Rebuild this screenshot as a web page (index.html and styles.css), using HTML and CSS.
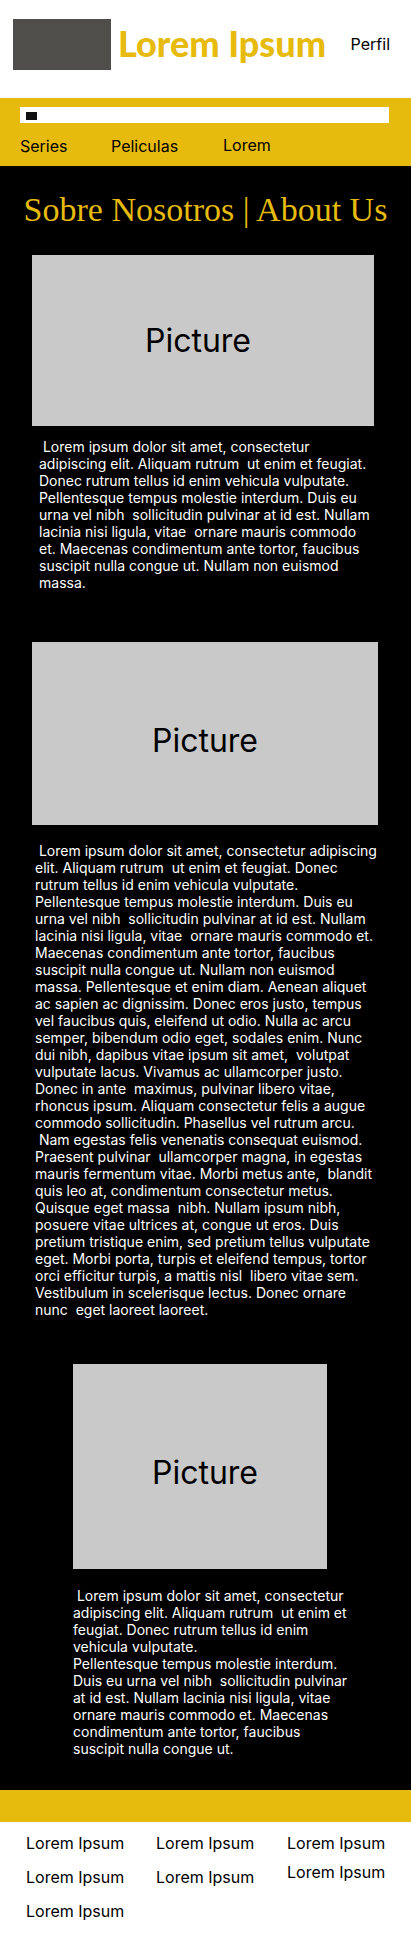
FILE: index.html
```html
<!DOCTYPE html>
<html lang="es">
<head>
<meta charset="utf-8">
<meta name="viewport" content="width=device-width, initial-scale=1">
<title>Sobre Nosotros | About Us</title>
<link rel="stylesheet" href="styles.css">
</head>
<body>
<header class="header">
  <div class="logo"></div>
  <div class="brand">Lorem Ipsum</div>
  <a class="profile" href="#">Perfil</a>
</header>
<div class="toolbar">
  <form class="search">
    <button class="search-button" type="button" aria-label="Buscar"></button>
    <input class="search-input" type="text" aria-label="Buscar">
  </form>
  <nav class="nav">
    <a class="nav-link" href="#">Series</a>
    <a class="nav-link" href="#">Peliculas</a>
    <a class="nav-link nav-link-raised" href="#">Lorem</a>
  </nav>
</div>
<main class="main">
  <h1 class="title">Sobre Nosotros | About Us</h1>
  <section class="story story-first">
    <div class="picture">Picture</div>
    <p class="text"> Lorem ipsum dolor sit amet, consectetur adipiscing elit. Aliquam rutrum  ut enim et feugiat. Donec rutrum tellus id enim vehicula vulputate. Pellentesque tempus molestie interdum. Duis eu urna vel nibh  sollicitudin pulvinar at id est. Nullam lacinia nisi ligula, vitae  ornare mauris commodo et. Maecenas condimentum ante tortor, faucibus suscipit nulla congue ut. Nullam non euismod massa.</p>
  </section>
  <section class="story story-second">
    <div class="picture">Picture</div>
    <p class="text"> Lorem ipsum dolor sit amet, consectetur adipiscing elit. Aliquam rutrum  ut enim et feugiat. Donec rutrum tellus id enim vehicula vulputate.
Pellentesque tempus molestie interdum. Duis eu urna vel nibh  sollicitudin pulvinar at id est. Nullam lacinia nisi ligula, vitae  ornare mauris commodo et. Maecenas condimentum ante tortor, faucibus suscipit nulla congue ut. Nullam non euismod massa. Pellentesque et enim diam. Aenean aliquet ac sapien ac dignissim. Donec eros justo, tempus vel faucibus quis, eleifend ut odio. Nulla ac arcu semper, bibendum odio eget, sodales enim. Nunc dui nibh, dapibus vitae ipsum sit amet,  volutpat vulputate lacus. Vivamus ac ullamcorper justo. Donec in ante  maximus, pulvinar libero vitae, rhoncus ipsum. Aliquam consectetur felis a augue commodo sollicitudin. Phasellus vel rutrum arcu.
 Nam egestas felis venenatis consequat euismod. Praesent pulvinar  ullamcorper magna, in egestas mauris fermentum vitae. Morbi metus ante,  blandit quis leo at, condimentum consectetur metus. Quisque eget massa  nibh. Nullam ipsum nibh, posuere vitae ultrices at, congue ut eros. Duis pretium tristique enim, sed pretium tellus vulputate eget. Morbi porta, turpis et eleifend tempus, tortor orci efficitur turpis, a mattis nisl  libero vitae sem. Vestibulum in scelerisque lectus. Donec ornare nunc  eget laoreet laoreet.</p>
  </section>
  <section class="story story-third">
    <div class="picture">Picture</div>
    <p class="text"> Lorem ipsum dolor sit amet, consectetur adipiscing elit. Aliquam rutrum  ut enim et feugiat. Donec rutrum tellus id enim vehicula vulputate.
Pellentesque tempus molestie interdum. Duis eu urna vel nibh  sollicitudin pulvinar at id est. Nullam lacinia nisi ligula, vitae ornare mauris commodo et. Maecenas condimentum ante tortor, faucibus suscipit nulla congue ut.</p>
  </section>
</main>
<footer class="footer">
  <div class="column">
    <a class="footer-link" href="#">Lorem Ipsum</a>
    <a class="footer-link" href="#">Lorem Ipsum</a>
    <a class="footer-link" href="#">Lorem Ipsum</a>
  </div>
  <div class="column">
    <a class="footer-link" href="#">Lorem Ipsum</a>
    <a class="footer-link" href="#">Lorem Ipsum</a>
  </div>
  <div class="column column-tight">
    <a class="footer-link" href="#">Lorem Ipsum</a>
    <a class="footer-link" href="#">Lorem Ipsum</a>
  </div>
</footer>
</body>
</html>
```
FILE: styles.css
```css
:root {
  --gold: #e6bb0e;
}

* {
  box-sizing: border-box;
}

body {
  margin: 0;
  background: #fff;
  color: #000;
  font: 16px/20px Inter, "Liberation Sans", sans-serif;
}

a {
  color: inherit;
  text-decoration: none;
}

.header {
  display: flex;
  align-items: center;
  padding: 19px 21px 28px 13px;
}

.logo {
  width: 98px;
  height: 51px;
  background: #4f4e4b;
}

.brand {
  margin-left: 7px;
  padding-bottom: 4px;
  color: var(--gold);
  font: 900 36px/44px Lato, sans-serif;
  white-space: nowrap;
}

.profile {
  margin-left: auto;
  padding-bottom: 2px;
}

.toolbar {
  padding: 9px 22px 10px 20px;
  background: var(--gold);
}

.search {
  display: flex;
  align-items: center;
  height: 16px;
  padding-left: 6px;
  background: #fff;
}

.search-button {
  width: 11px;
  height: 8px;
  margin-top: 2px;
  padding: 0;
  border: 0;
  background: #111;
}

.search-input {
  flex: 1;
  min-width: 0;
  height: 16px;
  padding: 0 4px;
  border: 0;
  background: transparent;
  font: 12px/16px Inter, sans-serif;
}

.nav {
  display: grid;
  grid-template-columns: 91px 112px 1fr;
  padding-top: 13px;
}

.nav-link-raised {
  margin-top: -1px;
}

.main {
  padding: 24px 0 33px;
  background: #000;
  color: #fff;
}

.title {
  margin: 0;
  color: var(--gold);
  font: 400 34px/40px "Liberation Serif", serif;
  text-align: center;
  white-space: nowrap;
}

.picture {
  display: flex;
  align-items: center;
  justify-content: center;
  background: #c9c9c9;
  color: #000;
  font-size: 32px;
  line-height: 40px;
}

.text {
  margin: 0;
  font-size: 14px;
  line-height: 17px;
  white-space: pre-wrap;
}

.story-first {
  padding: 25px 37px 0 32px;
}

.story-first .picture {
  height: 171px;
  padding-right: 10px;
}

.story-first .text {
  padding: 12px 3px 0 7px;
}

.story-second {
  padding: 51px 33px 0 32px;
}

.story-second .picture {
  height: 183px;
  padding-top: 14px;
}

.story-second .text {
  padding: 17px 0 0 3px;
}

.story-third {
  padding: 46px 60px 0 73px;
}

.story-third .picture {
  height: 205px;
  margin-right: 24px;
  padding: 12px 0 0 10px;
}

.story-third .text {
  padding-top: 18px;
}

.footer {
  display: grid;
  grid-template-columns: 130px 131px 1fr;
  padding: 11px 20px 21px 26px;
  border-top: 32px solid var(--gold);
}

.column {
  display: flex;
  flex-direction: column;
  gap: 14px;
}

.column-tight {
  gap: 9px;
}
```
